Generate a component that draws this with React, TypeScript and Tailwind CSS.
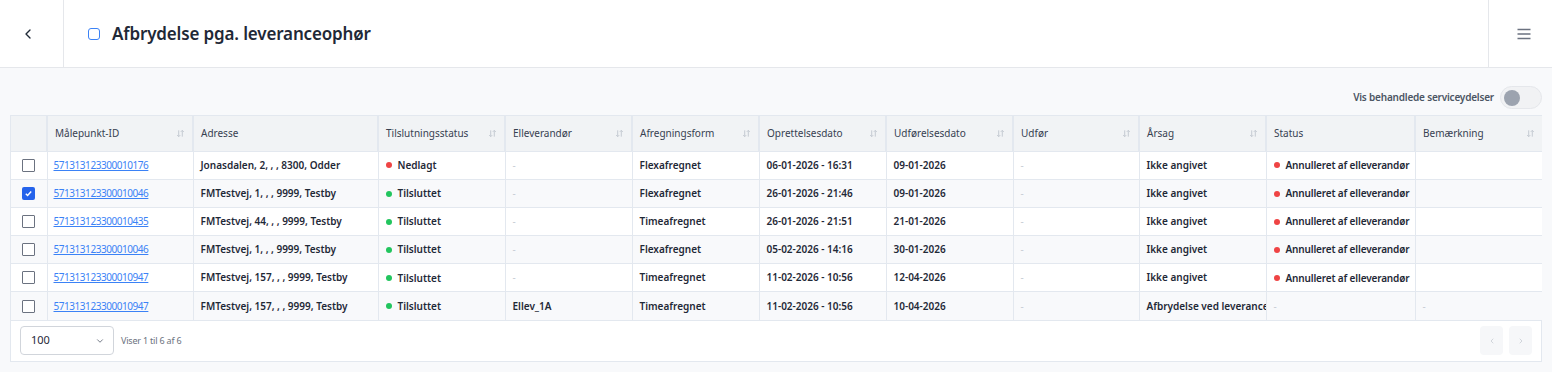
import React from "react";

type Row = {
  id: string;
  addr: string;
  conn: "Nedlagt" | "Tilsluttet";
  elev: string;
  afr: string;
  opr: string;
  udf: string;
  aars: string;
  status: string;
  bem: string;
  checked?: boolean;
};

const rows: Row[] = [
  { id: "571313123300010176", addr: "Jonasdalen, 2, , , 8300, Odder", conn: "Nedlagt", elev: "-", afr: "Flexafregnet", opr: "06-01-2026 - 16:31", udf: "09-01-2026", aars: "Ikke angivet", status: "Annulleret af elleverandør", bem: "" },
  { id: "571313123300010046", addr: "FMTestvej, 1, , , 9999, Testby", conn: "Tilsluttet", elev: "-", afr: "Flexafregnet", opr: "26-01-2026 - 21:46", udf: "09-01-2026", aars: "Ikke angivet", status: "Annulleret af elleverandør", bem: "", checked: true },
  { id: "571313123300010435", addr: "FMTestvej, 44, , , 9999, Testby", conn: "Tilsluttet", elev: "-", afr: "Timeafregnet", opr: "26-01-2026 - 21:51", udf: "21-01-2026", aars: "Ikke angivet", status: "Annulleret af elleverandør", bem: "" },
  { id: "571313123300010046", addr: "FMTestvej, 1, , , 9999, Testby", conn: "Tilsluttet", elev: "-", afr: "Flexafregnet", opr: "05-02-2026 - 14:16", udf: "30-01-2026", aars: "Ikke angivet", status: "Annulleret af elleverandør", bem: "" },
  { id: "571313123300010947", addr: "FMTestvej, 157, , , 9999, Testby", conn: "Tilsluttet", elev: "-", afr: "Timeafregnet", opr: "11-02-2026 - 10:56", udf: "12-04-2026", aars: "Ikke angivet", status: "Annulleret af elleverandør", bem: "" },
  { id: "571313123300010947", addr: "FMTestvej, 157, , , 9999, Testby", conn: "Tilsluttet", elev: "Ellev_1A", afr: "Timeafregnet", opr: "11-02-2026 - 10:56", udf: "10-04-2026", aars: "Afbrydelse ved leveranceophør", status: "-", bem: "-" },
];

const headers: { label: string; sort: boolean; w: number }[] = [
  { label: "Målepunkt-ID", sort: true, w: 146 },
  { label: "Adresse", sort: false, w: 185 },
  { label: "Tilslutningsstatus", sort: true, w: 127 },
  { label: "Elleverandør", sort: true, w: 127 },
  { label: "Afregningsform", sort: true, w: 127 },
  { label: "Oprettelsesdato", sort: true, w: 127 },
  { label: "Udførelsesdato", sort: true, w: 127 },
  { label: "Udfør", sort: true, w: 126 },
  { label: "Årsag", sort: true, w: 127 },
  { label: "Status", sort: false, w: 149 },
  { label: "Bemærkning", sort: true, w: 127 },
];

function SortIcon() {
  return (
    <svg width="9" height="9" viewBox="0 0 10 10" fill="none" stroke="#c4c9d1" strokeWidth="1.1">
      <path d="M3 1.5v7M1.3 6.8L3 8.5l1.7-1.7" />
      <path d="M7 8.5v-7M5.3 3.2L7 1.5l1.7 1.7" />
    </svg>
  );
}

function Check({ checked }: { checked?: boolean }) {
  if (checked) {
    return (
      <span className="flex h-[13px] w-[13px] items-center justify-center rounded-[2px] bg-[#2563eb]">
        <svg width="9" height="9" viewBox="0 0 10 10" fill="none" stroke="white" strokeWidth="1.6">
          <path d="M2 5.2l2 2 4-4.4" />
        </svg>
      </span>
    );
  }
  return <span className="block h-[13px] w-[13px] rounded-[1px] border border-[#6b7280] bg-white" />;
}

function Dash() {
  return <span className="font-normal text-[#c7ccd4]">-</span>;
}

function Dot({ color }: { color: string }) {
  return <span className={`mr-[6px] inline-block h-[6px] w-[6px] rounded-full ${color}`} />;
}

const cell = "border-r border-b border-[#e3e8ef] px-[7px] font-semibold whitespace-nowrap overflow-hidden";

export default function App() {
  return (
    <div
      className="min-h-[372px] w-[1552px] bg-[#f8f9fb] text-[#1f2937]"
      style={{ fontFamily: '"Noto Sans", "Open Sans", sans-serif' }}
    >
      {/* Top bar */}
      <div className="flex h-[68px] items-stretch border-b border-[#e5e7eb] bg-white">
        <div className="flex w-[64px] items-center justify-center border-r border-[#e5e7eb]">
          <svg width="16" height="16" viewBox="0 0 24 24" fill="none" stroke="#1f2937" strokeWidth="2" strokeLinecap="round" strokeLinejoin="round" className="-ml-[8px]">
            <path d="M15 6l-6 6 6 6" />
          </svg>
        </div>
        <div className="flex flex-1 items-center pl-[24px]">
          <span className="mr-[12px] block h-[12px] w-[12px] rounded-[3px] border border-[#3b82f6] bg-white" />
          <span className="text-[17px] font-semibold tracking-[-0.15px] text-[#1f2937]">Afbrydelse pga. leveranceophør</span>
        </div>
        <div className="flex w-[64px] items-center justify-center border-l border-[#e5e7eb]">
          <svg width="16" height="14" viewBox="0 0 16 14" fill="none" stroke="#6b7280" strokeWidth="1.3" className="ml-[6px]">
            <path d="M1.5 2.5h13M1.5 7h13M1.5 11.5h13" />
          </svg>
        </div>
      </div>

      <div className="px-[10px] pt-[18px]">
        {/* toggle row */}
        <div className="flex items-center justify-end gap-[6px]">
          <span className="text-[10px] font-semibold tracking-[-0.2px] text-[#4b5563]">Vis behandlede serviceydelser</span>
          <span className="flex h-[23px] w-[42px] items-center rounded-full border border-[#e5e7eb] bg-[#f1f2f4] px-[3px]">
            <span className="block h-[16px] w-[16px] rounded-full bg-[#9ca3af]" />
          </span>
        </div>

        {/* table */}
        <div className="mt-[6px] border border-[#e3e8ef] bg-white">
          <table className="w-full table-fixed border-collapse text-[10px]">
            <colgroup>
              <col style={{ width: 36 }} />
              {headers.map((h) => (
                <col key={h.label} style={{ width: h.w }} />
              ))}
            </colgroup>
            <thead>
              <tr className="h-[35px] bg-[#f1f3f5]">
                <th className="border-r-2 border-b border-[#e3e8ef]" />
                {headers.map((h, i) => (
                  <th
                    key={h.label}
                    className={`border-b border-[#e3e8ef] px-[7px] text-left font-normal text-[#374151] ${i < headers.length - 1 ? "border-r-2" : ""}`}
                  >
                    <div className="flex items-center justify-between">
                      <span className="whitespace-nowrap">{h.label}</span>
                      {h.sort && <SortIcon />}
                    </div>
                  </th>
                ))}
              </tr>
            </thead>
            <tbody>
              {rows.map((r, idx) => (
                <tr key={idx} className={`h-[28.2px] ${idx % 2 === 1 ? "bg-[#f8f9fb]" : "bg-white"}`}>
                  <td className="border-r border-b border-[#e3e8ef]">
                    <div className="flex justify-center">
                      <Check checked={r.checked} />
                    </div>
                  </td>
                  <td className="border-r border-b border-[#e3e8ef] px-[6px]">
                    <a className="tracking-[-0.45px] text-[#3b82f6] underline underline-offset-[1px]">{r.id}</a>
                  </td>
                  <td className={cell}>{r.addr}</td>
                  <td className={cell}>
                    <span className="inline-flex items-center">
                      <Dot color={r.conn === "Nedlagt" ? "bg-[#ef4444]" : "bg-[#22c55e]"} />
                      {r.conn}
                    </span>
                  </td>
                  <td className={cell}>{r.elev === "-" ? <Dash /> : r.elev}</td>
                  <td className={cell}>{r.afr}</td>
                  <td className={cell}>{r.opr}</td>
                  <td className={cell}>{r.udf}</td>
                  <td className={cell}><Dash /></td>
                  <td className="border-r border-b border-[#e3e8ef] pl-[7px] font-semibold whitespace-nowrap overflow-hidden">{r.aars}</td>
                  <td className={cell}>
                    {r.status === "-" ? (
                      <Dash />
                    ) : (
                      <span className="inline-flex items-center tracking-[-0.15px]">
                        <Dot color="bg-[#ef4444]" />
                        {r.status}
                      </span>
                    )}
                  </td>
                  <td className="border-b border-[#e3e8ef] px-[7px] font-semibold">{r.bem === "-" ? <Dash /> : r.bem}</td>
                </tr>
              ))}
            </tbody>
          </table>

          {/* footer */}
          <div className="flex h-[40px] items-center justify-between px-[9px]">
            <div className="flex items-center gap-[7px]">
              <div className="flex h-[29px] w-[94px] items-center justify-between rounded-[4px] border border-[#d1d5db] bg-white pl-[10px] pr-[8px] text-[11px] text-[#1f2937]">
                <span>100</span>
                <svg width="10" height="10" viewBox="0 0 24 24" fill="none" stroke="#6b7280" strokeWidth="2.2" strokeLinecap="round" strokeLinejoin="round">
                  <path d="M6 9l6 6 6-6" />
                </svg>
              </div>
              <span className="text-[9px] tracking-[-0.2px] text-[#6b7280]">Viser 1 til 6 af 6</span>
            </div>
            <div className="flex items-center gap-[6px]">
              <button className="flex h-[29px] w-[23px] items-center justify-center rounded-[4px] bg-[#f6f7f9]">
                <svg width="8" height="8" viewBox="0 0 24 24" fill="none" stroke="#d1d5db" strokeWidth="3" strokeLinecap="round" strokeLinejoin="round">
                  <path d="M15 6l-6 6 6 6" />
                </svg>
              </button>
              <button className="flex h-[29px] w-[23px] items-center justify-center rounded-[4px] bg-[#f6f7f9]">
                <svg width="8" height="8" viewBox="0 0 24 24" fill="none" stroke="#d1d5db" strokeWidth="3" strokeLinecap="round" strokeLinejoin="round">
                  <path d="M9 6l6 6-6 6" />
                </svg>
              </button>
            </div>
          </div>
        </div>
      </div>
    </div>
  );
}
